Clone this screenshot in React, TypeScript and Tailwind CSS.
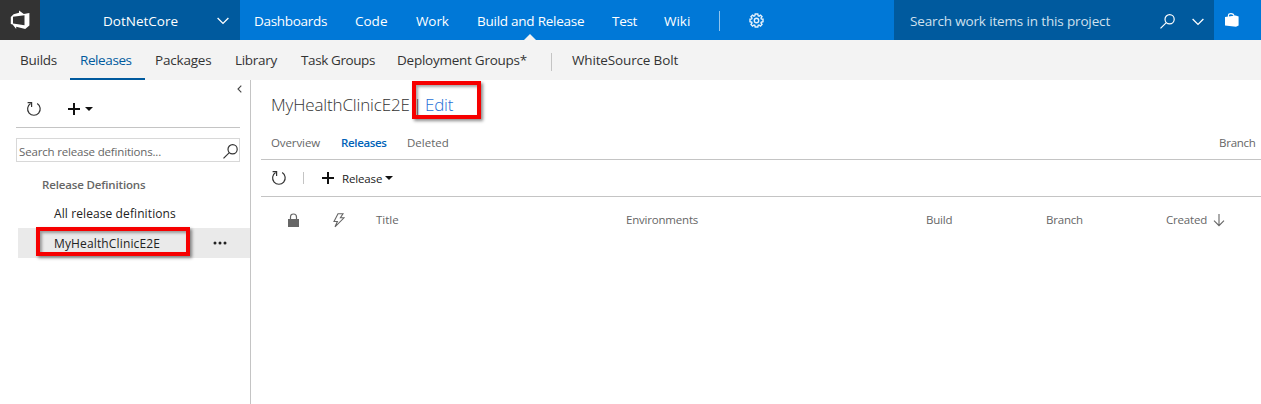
import type { ReactNode } from "react";

const FONT = "font-['Open_Sans','Noto_Sans',sans-serif]";

function Refresh() {
  return (
    <svg width="16" height="16" viewBox="0 0 16 16" fill="none" stroke="#333" strokeWidth="1.2">
      <path d="M11.2 2.6A6.3 6.3 0 1 1 4.6 2.6" />
      <path d="M1.6 1.7H5.6V6" />
    </svg>
  );
}

function Plus() {
  return (
    <svg width="12" height="12" viewBox="0 0 12 12" stroke="#111" strokeWidth="2">
      <path d="M6 0V12M0 6H12" />
    </svg>
  );
}

function Caret() {
  return (
    <svg width="8" height="4" viewBox="0 0 8 4" fill="#111">
      <path d="M0 0H8L4 4Z" />
    </svg>
  );
}

function Chevron({ className }: { className: string }) {
  return (
    <svg className={className} width="12" height="8" viewBox="0 0 12 8" fill="none" stroke="#fff" strokeWidth="1.3">
      <path d="M0.6 1L6 6.4L11.4 1" />
    </svg>
  );
}

function Magnifier({ color, className }: { color: string; className: string }) {
  return (
    <svg className={className} width="15" height="15" viewBox="0 0 15 15" fill="none" stroke={color} strokeWidth="1.2">
      <circle cx="9.6" cy="5.3" r="4.6" />
      <path d="M6.3 8.6L0.5 14.4" />
    </svg>
  );
}

function Gear() {
  return (
    <svg width="15" height="15" viewBox="0 0 15 15" fill="none" stroke="#e6f1fb" strokeWidth="1.4">
      <path d="M6.2 1H8.8L9.2 2.8L10 3.1L11.5 2.1L13 3.6L12 5.1L12.3 5.9L14 6.2V8.8L12.3 9.2L12 10L13 11.5L11.5 13L10 12L9.2 12.3L8.8 14H6.2L5.8 12.3L5 12L3.5 13L2 11.5L3 10L2.7 9.2L1 8.8V6.2L2.7 5.9L3 5.1L2 3.6L3.5 2.1L5 3.1L5.8 2.8Z" />
      <circle cx="7.5" cy="7.5" r="2.2" />
    </svg>
  );
}

function Cell({ className, children }: { className: string; children: ReactNode }) {
  return <div className={`shrink-0 whitespace-nowrap ${className}`}>{children}</div>;
}

function TopBar() {
  return (
    <header className="flex h-10 bg-[#0078d7] text-[13.5px] leading-[42px] text-white">
      <div className="flex w-10 shrink-0 items-center justify-center bg-[#333]">
        <svg width="20" height="20" viewBox="0 0 20 20" fill="#fff">
          <path fillRule="evenodd" d="M0.8 7L3.6 4.2L9 2.8V0.5L13.8 4L19.4 3V15.5L15.2 19L6.2 16.8V19L2.6 14.4L0.8 14ZM3 6.7V13.6L14.5 15.2V5.2Z" />
        </svg>
      </div>
      <div className="flex w-[200px] shrink-0 bg-[#005a9e]">
        <Cell className="w-[177px] pl-[63px]">DotNetCore</Cell>
        <Chevron className="mt-[17px]" />
      </div>
      <Cell className="w-[101px] pl-[14px] tracking-[-0.3px]">Dashboards</Cell>
      <Cell className="w-[61px] pl-[14px]">Code</Cell>
      <Cell className="w-[61px] pl-[14px] tracking-[-0.1px]">Work</Cell>
      <Cell className="relative w-[136px] pl-[14px] tracking-[-0.25px]">
        Build and Release
        <svg className="absolute top-[34px] left-[61px]" width="12" height="6" viewBox="0 0 12 6" fill="#f3f3f3">
          <path d="M0 6L6 0L12 6Z" />
        </svg>
      </Cell>
      <Cell className="w-[51px] pl-[13px] tracking-[-0.3px]">Test</Cell>
      <Cell className="w-[69px] pl-[14px]">Wiki</Cell>
      <div className="mt-[11px] h-5 w-px bg-[#8fc4ee]" />
      <div className="w-[174px] pt-[13px] pl-[29px]">
        <Gear />
      </div>
      <div className="flex w-80 shrink-0 bg-[#005a9e] text-[#cfe0ee]">
        <Cell className="w-[266px] pl-4 tracking-[-0.15px]">Search work items in this project</Cell>
        <Magnifier color="#fff" className="mt-[14px]" />
        <Chevron className="mt-[18px] ml-[17px]" />
      </div>
      <div className="pt-3 pl-[11px]">
        <svg width="15" height="16" viewBox="0 0 15 16">
          <path d="M3.4 6V3.5Q3.6 1.6 6 1.6T9 3.5V6" fill="none" stroke="#fff" strokeWidth="1.1" />
          <path d="M0 5L10.6 3.6L13.6 4.4V13.4L11 14.8L0 13.6Z" fill="#fff" />
        </svg>
      </div>
    </header>
  );
}

function SubNav() {
  return (
    <nav className="flex h-10 bg-[#f3f3f3] text-[13.5px] leading-[41px] text-[#333]">
      <Cell className="w-[70px] pl-5 tracking-[-0.25px]">Builds</Cell>
      <Cell className="w-[75px] border-b-2 border-[#005a9e] pl-[10px] tracking-[-0.4px] text-[#005a9e]">Releases</Cell>
      <Cell className="w-[79px] pl-[10px] tracking-[-0.2px]">Packages</Cell>
      <Cell className="w-[66px] pl-[11px] tracking-[-0.3px]">Library</Cell>
      <Cell className="w-[97px] pl-[11px] tracking-[-0.4px]">Task Groups</Cell>
      <Cell className="w-[164px] pl-[10px] tracking-[-0.25px]">Deployment Groups*</Cell>
      <div className="mt-[13px] h-[18px] w-px bg-[#c4c4c4]" />
      <Cell className="pl-5 tracking-[-0.15px]">WhiteSource Bolt</Cell>
    </nav>
  );
}

function Sidebar() {
  return (
    <aside className="relative w-[251px] shrink-0 border-r border-[#c4c4c4] text-[12px]">
      <svg className="absolute top-[5px] left-[237px]" width="5" height="8" viewBox="0 0 5 8" fill="none" stroke="#444" strokeWidth="1.1">
        <path d="M4.3 0.6L1 4L4.3 7.4" />
      </svg>
      <div className="ml-4 flex h-12 w-56 items-center border-b border-[#c4c4c4] pt-[10px] pl-[10px]">
        <Refresh />
        <div className="w-[26px]" />
        <Plus />
        <div className="w-[5px]" />
        <Caret />
      </div>
      <div className="mt-[10px] ml-4 flex h-6 w-56 border border-[#d8d8d8] pl-[2px] leading-[26px] text-[#666]">
        <Cell className="w-[204px] text-[11.5px] tracking-[-0.17px]">Search release definitions...</Cell>
        <Magnifier color="#333" className="mt-[5px]" />
      </div>
      <div className="mt-[8px] h-[30px] pl-[42px] text-[11.5px] leading-[30px] font-semibold tracking-[-0.15px] text-[#666]">Release Definitions</div>
      <div className="mt-[-2px] h-[30px] pl-[54px] leading-[32px] tracking-[0.1px] text-[#222]">All release definitions</div>
      <div className="ml-[18px] flex h-[30px] items-center bg-[#eaeaea] pl-9 leading-[30px] text-[#222]">
        <Cell className="w-[159px] pt-[2px] tracking-[0.14px]">MyHealthClinicE2E</Cell>
        <svg width="14" height="4" viewBox="0 0 14 4" fill="#222">
          <circle cx="2" cy="2" r="1.5" />
          <circle cx="7" cy="2" r="1.5" />
          <circle cx="12" cy="2" r="1.5" />
        </svg>
      </div>
      <div className="absolute top-[147px] left-9 h-[29px] w-[154px] border-4 border-[#f60000] shadow-[2px_2px_3px_rgba(0,0,0,0.45),inset_2px_2px_3px_rgba(0,0,0,0.35)]" />
    </aside>
  );
}

function Main() {
  return (
    <main className="min-w-0 flex-1 overflow-hidden pl-[10px] text-[11.5px] text-[#666]">
      <div className="relative flex h-[47px] pl-[10px] text-[17px] leading-[50px] font-light text-[#333]">
        <Cell className="w-[142px] tracking-[-0.15px]">MyHealthClinicE2E</Cell>
        <Cell className="w-[12px]">|</Cell>
        <Cell className="tracking-[-0.2px] text-[#1f6fd6]">Edit</Cell>
        <div className="absolute top-[1px] left-[151px] h-[38px] w-[69px] border-4 border-[#f60000] shadow-[2px_2px_3px_rgba(0,0,0,0.45),inset_2px_2px_3px_rgba(0,0,0,0.35)]" />
      </div>
      <div className="flex h-[33px] border-b border-[#c4c4c4] pl-[10px] leading-[32px]">
        <Cell className="w-[70px] tracking-[-0.1px]">Overview</Cell>
        <Cell className="w-[66px] font-semibold tracking-[-0.35px] text-[#0062b8]">Releases</Cell>
        <Cell className="w-[812px]">Deleted</Cell>
        <Cell className="tracking-[-0.25px]">Branch</Cell>
      </div>
      <div className="flex h-[37px] items-center border-b border-[#c4c4c4] pl-[10px] text-[#222]">
        <Refresh />
        <div className="ml-[16px] h-3 w-px bg-[#c4c4c4]" />
        <div className="w-[18px]" />
        <Plus />
        <Cell className="w-[51px] pt-[2px] pl-2 tracking-[-0.15px]">Release</Cell>
        <Caret />
      </div>
      <div className="flex h-[46px] leading-[46px]">
        <div className="w-[72px] shrink-0 pt-[16px] pl-[27px]">
          <svg width="11" height="15" viewBox="0 0 11 15">
            <path d="M2.5 7V4Q2.5 1 5.5 1T8.5 4V7" fill="none" stroke="#666" strokeWidth="1.2" />
            <path d="M0 6H11V14H0Z" fill="#666" />
          </svg>
        </div>
        <div className="w-[43px] shrink-0 pt-[16px]">
          <svg width="12" height="15" viewBox="0 0 12 15" fill="none" stroke="#666" strokeWidth="1.1">
            <path d="M5 0.7H10L7.4 4.8H11L2 13.8L4.4 8.5H1Z" />
          </svg>
        </div>
        <Cell className="w-[250px]">Title</Cell>
        <Cell className="w-[300px] tracking-[-0.2px]">Environments</Cell>
        <Cell className="w-[120px] tracking-[-0.2px]">Build</Cell>
        <Cell className="w-[120px] tracking-[-0.2px]">Branch</Cell>
        <Cell className="w-[47px] tracking-[-0.2px]">Created</Cell>
        <svg className="mt-[17px] shrink-0" width="12" height="13" viewBox="0 0 12 13" fill="none" stroke="#666" strokeWidth="1.1">
          <path d="M6 0V11.5M1 6.7L6 11.7L11 6.7" />
        </svg>
      </div>
    </main>
  );
}

export default function App() {
  return (
    <div className={`flex h-[404px] w-[1261px] flex-col overflow-hidden bg-white ${FONT}`}>
      <TopBar />
      <SubNav />
      <div className="flex min-h-0 flex-1">
        <Sidebar />
        <Main />
      </div>
    </div>
  );
}
